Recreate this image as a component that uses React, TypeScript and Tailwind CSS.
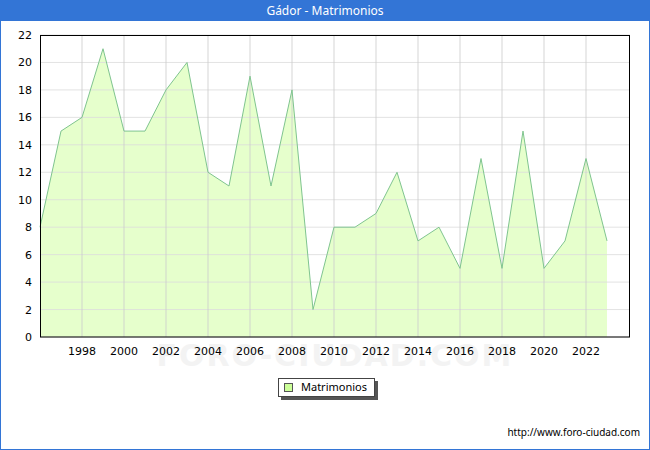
const data = [8, 15, 16, 21, 15, 15, 18, 20, 12, 11, 19, 11, 18, 2, 8, 8, 9, 12, 7, 8, 5, 13, 5, 15, 5, 7, 13, 7]

const X0 = 40
const Y0 = 337
const px = (i: number) => X0 + i * 21
const py = (v: number) => Y0 - (v * 302) / 22

export default function App() {
  const pts = data.map((v, i) => `${px(i)},${py(v)}`).join(" ")
  const area = `${px(0)},${Y0} ${pts} ${px(data.length - 1)},${Y0}`
  return (
    <div className="w-[650px] h-[450px] border border-[#3375d6] bg-white flex flex-col font-['DejaVu_Sans',sans-serif] text-[11px]">
      <div className="h-[20px] bg-[#3375d6] text-white text-[12px] flex items-center justify-center shrink-0">Gádor - Matrimonios</div>
      <svg width="648" height="350" className="shrink-0">
        <g transform="translate(-1,-21)" fontFamily="DejaVu Sans, sans-serif" fontSize="11">
          <text x={335} y={366} textAnchor="middle" fontSize="30" fontWeight="bold" fill="#f3f3f3" letterSpacing="2">FORO-CIUDAD.COM</text>
          <polygon points={area} fill="#e6ffcc" />
          {Array.from({ length: 12 }, (_, k) => k * 2).map((v) => (
            <g key={v}>
              <line x1={X0} x2={630} y1={py(v)} y2={py(v)} stroke="#dddddd" opacity="0.8" />
              <text x={32} y={py(v) + 4} textAnchor="end" fill="#000">{v}</text>
            </g>
          ))}
          {Array.from({ length: 13 }, (_, k) => k).map((k) => (
            <g key={k}>
              <line x1={px(2 + k * 2)} x2={px(2 + k * 2)} y1={35} y2={Y0} stroke="#cccccc" opacity="0.8" />
              <text x={px(2 + k * 2)} y={355} textAnchor="middle" fill="#000">{1998 + k * 2}</text>
            </g>
          ))}
          <polyline points={pts} fill="none" stroke="#7fc48f" strokeWidth="1" />
          <rect x={40.5} y={35.5} width={589} height={301.5} fill="none" stroke="#000" />
        </g>
      </svg>
      <div className="flex justify-center mt-[7px] pl-[3px]">
        <div className="flex items-center gap-[8px] h-[19px] px-[5px] pr-[7px] border border-[#444] bg-white shadow-[3px_3px_0_#555]">
          <span className="w-[9px] h-[9px] border border-[#555] bg-[#ccff99]" />
          <span className="text-[11px]">Matrimonios</span>
        </div>
      </div>
      <div className="mt-auto mb-[9px] mr-[9px] text-right text-[10px]">http://www.foro-ciudad.com</div>
    </div>
  )
}
